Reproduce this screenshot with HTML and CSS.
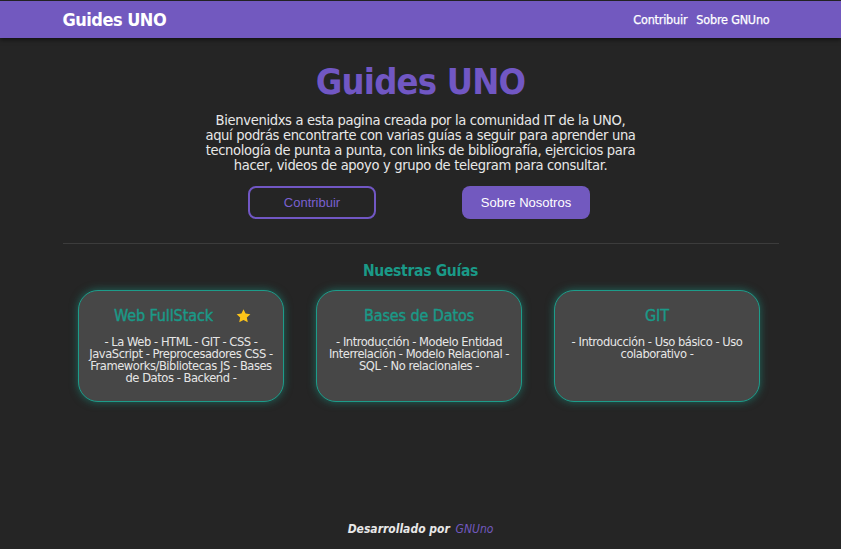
FILE: index.html
```html
<!DOCTYPE html>
<html lang="es">
<head>
<meta charset="utf-8">
<title>Guides UNO</title>
<link rel="stylesheet" href="styles.css">
</head>
<body>
<header class="topbar">
  <div class="topbar-inner">
    <a class="brand" href="#">Guides UNO</a>
    <nav class="nav">
      <a href="#">Contribuir</a>
      <a href="#">Sobre GNUno</a>
    </nav>
  </div>
</header>
<main class="main">
  <section class="hero">
    <h1 class="hero-title">Guides UNO</h1>
    <p class="hero-text">Bienvenidxs a esta pagina creada por la comunidad IT de la UNO, aquí podrás encontrarte con varias guías a seguir para aprender una tecnología de punta a punta, con links de bibliografía, ejercicios para hacer, videos de apoyo y grupo de telegram para consultar.</p>
    <div class="hero-actions">
      <a class="btn btn-outline" href="#">Contribuir</a>
      <a class="btn btn-fill" href="#">Sobre Nosotros</a>
    </div>
  </section>
  <hr class="divider">
  <section class="guides">
    <h2 class="guides-title">Nuestras Guías</h2>
    <div class="cards">
      <article class="card">
        <h3 class="card-title card-title-starred">Web FullStack <span class="star"><svg width="17" height="16" viewBox="0 0 24 24"><path d="M12 1.8l3.1 6.6 7.2.9-5.3 5 1.4 7.1L12 17.9l-6.4 3.5 1.4-7.1-5.3-5 7.2-.9z" fill="#fcc419"/></svg></span></h3>
        <p class="card-text">- La Web - HTML - GIT - CSS - JavaScript - Preprocesadores CSS - Frameworks/Bibliotecas JS - Bases de Datos - Backend -</p>
      </article>
      <article class="card">
        <h3 class="card-title">Bases de Datos</h3>
        <p class="card-text">- Introducción - Modelo Entidad Interrelación - Modelo Relacional - SQL - No relacionales -</p>
      </article>
      <article class="card">
        <h3 class="card-title">GIT</h3>
        <p class="card-text">- Introducción - Uso básico - Uso colaborativo -</p>
      </article>
    </div>
  </section>
</main>
<footer class="footer">
  <span class="footer-label">Desarrollado por</span> <a class="footer-link" href="#">GNUno</a>
</footer>
</body>
</html>
```
FILE: styles.css
```css
* { box-sizing: border-box; }
html, body { margin: 0; padding: 0; }
body {
  background: #252525;
  color: #e6e6e6;
  font-family: "DejaVu Sans", "Open Sans", sans-serif;
  font-stretch: condensed;
  min-height: 549px;
  display: flex;
  flex-direction: column;
  padding-top: 1px;
}
a { text-decoration: none; }
.topbar {
  background: #7259bf;
  height: 37px;
  box-shadow: 0 2px 4px rgba(0,0,0,0.5);
}
.topbar-inner {
  width: 716px;
  margin: 0 auto;
  height: 100%;
  display: flex;
  align-items: center;
  justify-content: space-between;
  padding-right: 9px;
  padding-left: 0;
}
.brand {
  color: #fff;
  font-weight: bold;
  font-size: 18px;
  letter-spacing: -0.5px;
}
.nav { display: flex; gap: 9px; }
.nav a { color: #fff; font-size: 12.5px; letter-spacing: -0.2px; -webkit-text-stroke: 0.25px #fff; }
.main {
  width: 716px;
  margin: 0 auto;
  flex: 1;
}
.hero {
  display: flex;
  flex-direction: column;
  align-items: center;
  padding-top: 22px;
}
.hero-title {
  margin: 0;
  color: #7157c4;
  font-size: 36px;
  line-height: 44px;
  font-weight: bold;
  letter-spacing: -0.8px;
}
.hero-text {
  margin: 8px 0 0;
  width: 440px;
  text-align: center;
  font-size: 14.6px;
  line-height: 15px;
  letter-spacing: -0.35px;
  color: #e8e8e8;
}
.hero-actions {
  display: flex;
  gap: 86px;
  margin-top: 14px;
  margin-right: 3px;
}
.btn {
  width: 128px;
  height: 33px;
  border-radius: 8px;
  display: flex;
  align-items: center;
  justify-content: center;
  font-family: "Liberation Sans", Arial, sans-serif;
  font-stretch: normal;
  font-size: 13px;
}
.btn-outline { border: 2px solid #7157c4; color: #7a60d0; }
.btn-fill { background: #7259bf; color: #fff; }
.divider {
  border: 0;
  border-top: 1px solid #3c3c3c;
  margin: 24px 0 0;
}
.guides { display: flex; flex-direction: column; align-items: center; }
.guides-title {
  margin: 17px 0 0;
  color: #1a9a88;
  font-size: 15.5px;
  line-height: 20px;
  font-weight: bold;
  letter-spacing: -0.3px;
}
.cards {
  display: flex;
  gap: 32px;
  margin-top: 9px;
  margin-right: 3px;
}
.card {
  width: 206px;
  height: 112px;
  background: #474747;
  border: 1px solid #1d9c8a;
  border-radius: 20px;
  box-shadow: 0 0 8px rgba(26,160,140,0.55);
  padding: 13px 6px 0;
  text-align: center;
}
.card-title {
  margin: 0;
  color: #1a9a88;
  font-size: 16px;
  line-height: 24px;
  font-weight: normal;
  -webkit-text-stroke: 0.4px #1a9a88;
  letter-spacing: -0.1px;
  display: flex;
  justify-content: center;
  align-items: center;
  gap: 22px;
}
.card-title-starred { padding-left: 4px; }
.star { display: flex; }
.card-text {
  margin: 8px 0 0;
  font-size: 12.8px;
  line-height: 12px;
  color: #e6e6e6;
  letter-spacing: -0.45px;
}
.footer {
  text-align: center;
  font-size: 12px;
  font-style: italic;
  font-weight: bold;
  padding-bottom: 13px;
  color: #e8e8e8;
}
.footer-link { color: #7259bf; margin-left: 2px; font-weight: normal; }
```
